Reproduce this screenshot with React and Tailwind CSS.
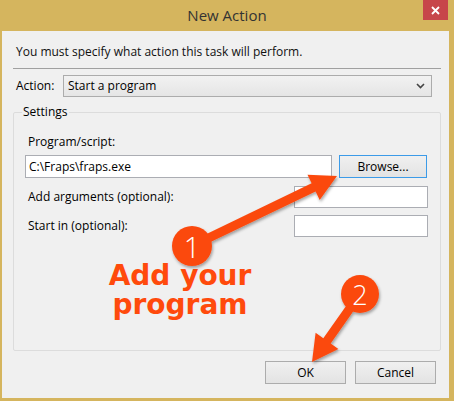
import React from 'react';

const UI_FONT = { fontFamily: "'Open Sans', 'Noto Sans', sans-serif" };
const ORANGE = '#fb4a10';

function Field({ className = '', children }) {
  return (
    <div className={`h-[22px] bg-white border border-[#abadb3] flex items-center px-[3px] text-[12px] text-black ${className}`}>
      {children}
    </div>
  );
}

function Button({ children, focused, className = '' }) {
  return (
    <div
      className={`h-[23px] flex items-center justify-center text-[12px] text-black bg-gradient-to-b from-[#f0f0f0] to-[#e3e3e3] border ${
        focused ? 'border-[#3c9be8]' : 'border-[#acacac]'
      } ${className}`}
    >
      {children}
    </div>
  );
}

// arrows and badges drawn over the dialog
function Annotations() {
  return (
    <>
      <svg className="absolute inset-0 pointer-events-none" width="454" height="401" viewBox="0 0 454 401">
        <defs>
          <filter id="shadow" x="-20%" y="-20%" width="140%" height="140%">
            <feDropShadow dx="1" dy="2" stdDeviation="1.5" floodColor="#000" floodOpacity="0.35" />
          </filter>
        </defs>
        <g fill={ORANGE} filter="url(#shadow)">
          <polygon points="190,242 311.6,183.2 307.5,174.7 337,176 319.7,199.9 315.6,191.4 194,250" />
          <polygon points="363.7,296.6 330.7,343.4 338.4,348.9 312,362 315.6,332.7 323.3,338.2 356.3,291.4" />
          <circle cx="192" cy="246" r="20" />
          <circle cx="360" cy="294" r="19" />
        </g>
      </svg>
      <div className="absolute left-[172px] top-[226px] w-[40px] h-[40px] flex items-center justify-center text-white text-[29px] font-light leading-none pointer-events-none" style={UI_FONT}>
        1
      </div>
      <div className="absolute left-[341px] top-[275px] w-[38px] h-[38px] flex items-center justify-center text-white text-[27px] font-light leading-none pointer-events-none" style={UI_FONT}>
        2
      </div>
    </>
  );
}

export default function App() {
  return (
    <div className="relative w-[454px] h-[401px] bg-[#d5b55e] flex flex-col overflow-hidden" style={UI_FONT}>
      {/* Title bar */}
      <div className="relative h-[31px] flex items-center justify-center shrink-0">
        <span className="text-[15px] text-[#333333] leading-none">New Action</span>
        <div className="absolute right-[6px] top-0 w-[25px] h-[20px] bg-[#c7464a] flex items-center justify-center">
          <svg width="9" height="9" viewBox="0 0 9 9">
            <path d="M1 1 L8 8 M8 1 L1 8" stroke="#fff" strokeWidth="1.8" />
          </svg>
        </div>
      </div>

      {/* Client area */}
      <div className="flex-1 ml-[2px] mr-[5px] mb-[3px] bg-[#f0f0f0] flex flex-col">
        <div className="ml-[14px] mt-[13px] leading-[16px] text-[12px] text-[#111]">
          You must specify what action this task will perform.
        </div>
        <div className="mt-[8px] ml-[11px] mr-[8px] h-px bg-[#a0a0a0]" />

        <div className="mt-[6px] flex items-center h-[22px]">
          <span className="ml-[14px] w-[47px] text-[12px] text-black">Action:</span>
          <div className="w-[369px] h-[22px] border border-[#acacac] bg-gradient-to-b from-[#f2f2f2] to-[#e5e5e5] flex items-center justify-between pl-[4px] pr-[6px] text-[12px] text-black">
            <span>Start a program</span>
            <svg width="9" height="6" viewBox="0 0 9 6">
              <path d="M1 1 L4.5 4.5 L8 1" fill="none" stroke="#444" strokeWidth="1.6" />
            </svg>
          </div>
        </div>

        <fieldset className="mt-[7px] ml-[11px] mr-[8px] border border-[#dcdcdc] rounded-[2px] pb-[31px]">
          <legend className="ml-[8px] px-[1px] text-[12px] leading-[16px] text-black">Settings</legend>

          <div className="mt-[14px] ml-[14px] text-[12px] leading-[16px] text-black">Program/script:</div>
          <div className="mt-[5px] ml-[11px] mr-[13px] flex items-center justify-between">
            <Field className="w-[307px] h-[23px]">C:\Fraps\fraps.exe</Field>
            <Button focused className="w-[88px]">Browse...</Button>
          </div>

          <div className="mt-[8px] ml-[14px] mr-[12px] flex items-center justify-between h-[22px]">
            <span className="text-[12px] text-black">Add arguments (optional):</span>
            <Field className="w-[134px]" />
          </div>
          <div className="mt-[7px] ml-[14px] mr-[12px] flex items-center justify-between h-[22px]">
            <span className="text-[12px] text-black">Start in (optional):</span>
            <Field className="w-[134px]" />
          </div>

          <div
            className="mt-[24px] ml-[81px] w-[170px] text-center text-[28px] leading-[29px] font-bold text-[#ff4a0c]"
            style={{ fontFamily: "'DejaVu Sans', Verdana, sans-serif" }}
          >
            Add your
            <br />
            program
          </div>
        </fieldset>

        <div className="mt-[10px] mr-[13px] flex justify-end gap-[9px]">
          <Button className="w-[81px]">OK</Button>
          <Button className="w-[81px]">Cancel</Button>
        </div>
      </div>

      <Annotations />
    </div>
  );
}
